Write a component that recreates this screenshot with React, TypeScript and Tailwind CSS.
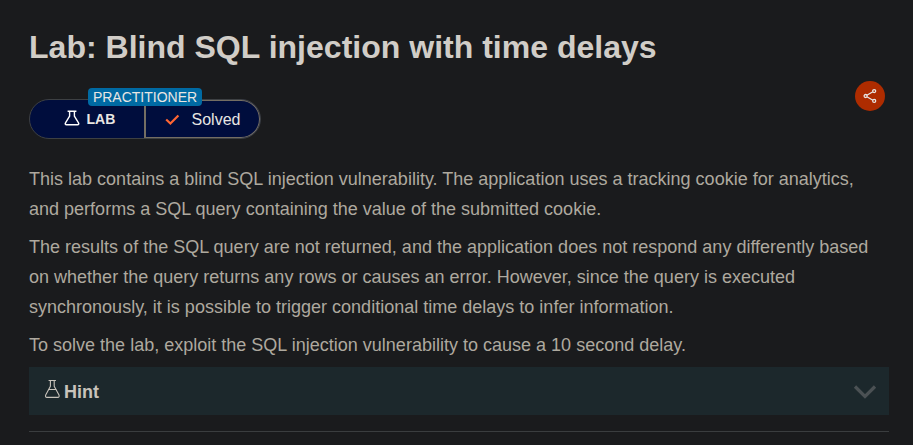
const Flask = ({ className, stroke }: { className: string; stroke: number }) => (
  <svg className={className} viewBox="0 0 16 20" fill="none" stroke="currentColor" strokeWidth={stroke} strokeLinejoin="round" strokeLinecap="round">
    <path d="M5 1.5h6.5M6.4 1.5v5.7L1.7 16c-.5 1.2 0 2.4 1.2 2.4h10.9c1.2 0 1.7-1.2 1.2-2.4l-4.8-8.8V1.5M4.5 10.5h7.8" />
  </svg>
);

const LabBadge = () => (
  <div className="relative mt-8 flex h-10 w-[232px] rounded-full border border-[#3d4043] bg-[#000d3d] text-[#e8e6e3]">
    <div className="flex w-[114px] items-center pl-[34px]">
      <svg className="-mt-0.5 h-4 w-4 text-white" viewBox="0 0 16 16" fill="none" stroke="currentColor" strokeWidth="1.4" strokeLinejoin="round">
        <path d="M3.6 1.3h8.8M5.6 1.3v4.9L1.5 12.8c-.7 1.2-.2 1.9 1 1.9h11c1.2 0 1.7-.7 1-1.9L10.4 6.2V1.3" />
      </svg>
      <span className="ml-[6.5px] text-sm font-bold">LAB</span>
    </div>
    <div className="flex w-[116px] items-center rounded-r-full border border-l-2 border-[#746e63] pl-[19px]">
      <svg className="mt-0.5 h-3 w-4" viewBox="0 0 16 12" fill="none" stroke="#ff6633" strokeWidth="2.2">
        <path d="M1.2 5.5l4.2 4 8-8" />
      </svg>
      <span className="ml-[10.5px] pt-px text-base">Solved</span>
    </div>
    <span className="absolute -top-3 left-[58px] h-[18px] w-[114px] rounded bg-[#006aa3] text-center text-sm leading-[18px]">PRACTITIONER</span>
  </div>
);

export default function App() {
  return (
    <main className="h-[445px] overflow-hidden bg-[#1a1b1d] pl-[29px] pr-6 pt-[27px] font-['Liberation_Sans',Arial,sans-serif] text-[#aea99f]">
      <h1 className="h-10 text-[32.04px] leading-10 font-bold whitespace-nowrap text-[#d1cdc7]">Lab: Blind SQL injection with time delays</h1>
      <div className="flex h-[97px] items-start justify-between">
        <LabBadge />
        <button aria-label="Share" className="mt-3.5 mr-1 flex h-[30px] w-[30px] items-center justify-center rounded-full bg-[#ae2c00] text-[#e8e6e3]">
          <svg className="h-4 w-4" viewBox="0 0 16 16" fill="none" stroke="currentColor" strokeWidth="1.3">
            <circle cx="3.6" cy="8" r="1.5" />
            <circle cx="12.2" cy="3.1" r="1.5" />
            <circle cx="12.2" cy="12.9" r="1.5" />
            <path d="M4.9 7.2l6-3.4M4.9 8.8l6 3.4" />
          </svg>
        </button>
      </div>
      <div className="flex flex-col gap-2 text-[18.025px] leading-[30px] whitespace-nowrap">
        <p>This lab contains a blind SQL injection vulnerability. The application uses a tracking cookie for analytics,<br />and performs a SQL query containing the value of the submitted cookie.</p>
        <p>The results of the SQL query are not returned, and the application does not respond any differently based<br />on whether the query returns any rows or causes an error. However, since the query is executed<br />synchronously, it is possible to trigger conditional time delays to infer information.</p>
        <p>To solve the lab, exploit the SQL injection vulnerability to cause a 10 second delay.</p>
      </div>
      <div className="mt-[7px] flex h-12 items-center bg-[#1c282c] px-[15px] text-[#c8c3bb]">
        <Flask className="-mt-1 h-5 w-4" stroke={1.1} />
        <span className="ml-1 pt-0.5 text-lg font-bold">Hint</span>
        <svg className="ml-auto -mr-[3px] mt-px h-4 w-6" viewBox="0 0 24 16" fill="none" stroke="#4b5154" strokeWidth="3.2">
          <path d="M2 2.5l10 10 10-10" />
        </svg>
      </div>
      <hr className="mt-4 border-t border-[#3a3d3f]" />
    </main>
  );
}
